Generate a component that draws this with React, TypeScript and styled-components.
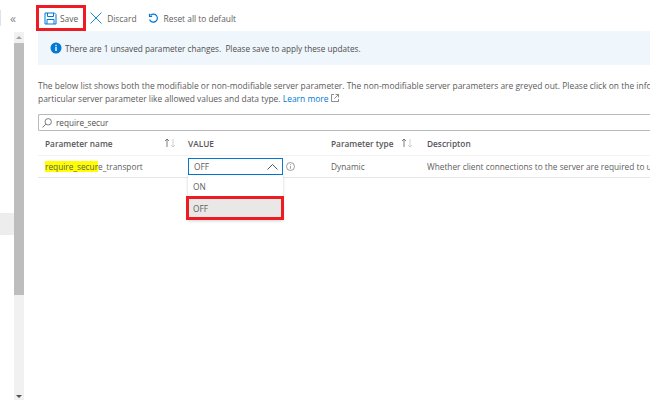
import styled, { createGlobalStyle } from "styled-components";

const GlobalStyle = createGlobalStyle`
  html, body {
    margin: 0;
    padding: 0;
    background: #fff;
  }
  body {
    font-family: "Open Sans", "Noto Sans", sans-serif;
    font-size: 9px;
    color: #5c5b5a;
  }
`;

const Page = styled.div`
  width: 650px;
  height: 400px;
  display: flex;
  overflow: hidden;
`;

const Sidebar = styled.div`
  width: 14px;
  flex: none;
  padding-top: 10px;
  box-sizing: border-box;
`;

const SideEdge = styled.div`
  width: 1px;
  height: 16px;
  margin-bottom: 187px;
  background: #e1e1e1;
`;

const SideItem = styled.div`
  height: 22px;
  background: #ededed;
`;

const ScrollColumn = styled.div`
  width: 10px;
  flex: none;
  display: flex;
  flex-direction: column;
`;

const Collapse = styled.div`
  height: 32px;
  width: 12px;
  margin-left: -7px;
  box-sizing: border-box;
  padding-top: 11px;
  text-align: center;
  font-size: 12px;
  line-height: 16px;
  color: #8a8886;
`;

const Track = styled.div`
  flex: 1;
  background: #f1f1f1;
  display: flex;
  flex-direction: column;
  align-items: center;
`;

const ArrowUp = styled.div`
  width: 0;
  height: 0;
  margin: 4px 0 4px;
  border-left: 3px solid transparent;
  border-right: 3px solid transparent;
  border-bottom: 3px solid #a3a3a3;
`;

const Thumb = styled.div`
  width: 100%;
  height: 252px;
  background: #bdbdbd;
`;

const ArrowDown = styled.div`
  width: 0;
  height: 0;
  margin: auto 0 2px;
  border-left: 3px solid transparent;
  border-right: 3px solid transparent;
  border-top: 3px solid #505050;
`;

const Main = styled.div`
  flex: 1;
  min-width: 0;
  display: flex;
  flex-direction: column;
`;

const Toolbar = styled.div`
  height: 31px;
  padding: 5px 0 0 12px;
  box-sizing: border-box;
  display: flex;
  align-items: flex-start;
`;

const ToolButton = styled.div<{ $outlined?: boolean }>`
  height: 26px;
  display: flex;
  align-items: center;
  gap: ${(p) => (p.$outlined ? 3 : 5)}px;
  box-sizing: border-box;
  padding: ${(p) => (p.$outlined ? "0 5px 0 5px" : "0 4px 0 1px")};
  border: ${(p) => (p.$outlined ? "3px solid #ed1c24" : "3px solid transparent")};
  font-size: 8.4px;
  color: #605e5c;
  white-space: nowrap;
`;

const Notice = styled.div`
  margin-left: 14px;
  height: 34px;
  padding-left: 12px;
  display: flex;
  align-items: center;
  gap: 3px;
  background: #eff6fc;
  font-size: 8.2px;
  color: #4f4e4d;
  white-space: pre;
`;

const Description = styled.p`
  margin: 14px 0 0 14px;
  width: 640px;
  font-size: 8.45px;
  line-height: 13px;
  color: #5c5b5a;
  white-space: nowrap;
`;

const LearnMore = styled.a`
  color: #0078d4;
  margin-right: 2px;
`;

const SearchBox = styled.div`
  margin: 9px 0 0 14px;
  height: 17px;
  box-sizing: border-box;
  border: 1px solid #b9b9b9;
  border-right: none;
  border-radius: 2px 0 0 2px;
  padding-left: 3px;
  display: flex;
  align-items: center;
  gap: 4px;
  font-size: 8.2px;
  color: #4f4e4d;
`;

const Table = styled.div`
  margin-left: 14px;
`;

const Row = styled.div<{ $header?: boolean }>`
  display: grid;
  grid-template-columns: 150px 143px 96px 1fr;
  height: ${(p) => (p.$header ? 24 : 21)}px;
  align-items: center;
  white-space: nowrap;
  border-bottom: ${(p) => (p.$header ? "1px solid #f3f2f1" : "1px solid #e6e6e6")};
  font-size: 8.3px;
  font-weight: ${(p) => (p.$header ? 600 : 400)};
  color: ${(p) => (p.$header ? "#57565a" : "#605e5c")};
`;

const HeadCell = styled.div<{ $first?: boolean }>`
  display: flex;
  align-items: center;
  justify-content: space-between;
  padding-left: ${(p) => (p.$first ? 7 : 0)}px;
  padding-right: ${(p) => (p.$first ? 12 : 14)}px;
`;

const ValueCell = styled.div`
  position: relative;
  height: 17px;
  display: flex;
  align-items: center;
  gap: 3px;
`;

const DescCell = styled.div`
  overflow: hidden;
`;

const NameCell = styled.div`
  padding-left: 7px;
`;

const Mark = styled.mark`
  background: #ffff00;
  color: inherit;
`;

const Select = styled.div`
  width: 95px;
  height: 17px;
  box-sizing: border-box;
  border: 1px solid #0078d4;
  padding: 0 4px 0 5px;
  display: flex;
  align-items: center;
  justify-content: space-between;
  color: #605e5c;
`;

const Dropdown = styled.div`
  position: absolute;
  top: 17px;
  left: 0;
  width: 95px;
  height: 45px;
  background: #fff;
  box-shadow: 0 1px 3px rgba(0, 0, 0, 0.18);
`;

const Option = styled.div`
  height: 22px;
  padding-left: 5px;
  display: flex;
  align-items: center;
`;

const SelectedOption = styled.div`
  position: absolute;
  left: -2px;
  top: 21px;
  width: 98px;
  height: 24px;
  box-sizing: border-box;
  padding-left: 4px;
  display: flex;
  align-items: center;
  background: #e9e8e7;
  border: 3px solid #ed1c24;
`;

const SortArrows = () => (
  <svg width="12" height="10" viewBox="0 0 12 10" fill="none">
    <path d="M3 9V1M1 3l2-2 2 2" stroke="#605e5c" strokeWidth="0.8" />
    <path d="M9 1v8M7 7l2 2 2-2" stroke="#c8c6c4" strokeWidth="0.8" />
  </svg>
);

export default function App() {
  return (
    <Page>
      <GlobalStyle />
      <Sidebar>
        <SideEdge />
        <SideItem />
      </Sidebar>
      <ScrollColumn>
        <Collapse>«</Collapse>
        <Track>
          <ArrowUp />
          <Thumb />
          <ArrowDown />
        </Track>
      </ScrollColumn>
      <Main>
        <Toolbar>
          <ToolButton $outlined>
            <svg width="13" height="13" viewBox="0 0 13 13" fill="none" stroke="#0078d4" strokeWidth="1">
              <path d="M1 1h9.5L12 2.5V12H1z" />
              <path d="M3.5 1v3.5h6V1M3 12V7.5h7V12" />
            </svg>
            Save
          </ToolButton>
          <ToolButton>
            <svg width="12" height="12" viewBox="0 0 12 12" fill="none" stroke="#0078d4" strokeWidth="0.9">
              <path d="M.5.5l11 11M11.5.5l-11 11" />
            </svg>
            Discard
          </ToolButton>
          <ToolButton>
            <svg width="11" height="11" viewBox="0 0 11 11" fill="none" stroke="#0078d4" strokeWidth="1.2">
              <path d="M2.6 2.2A4 4 0 1 1 1.6 6.5" />
              <path d="M1.5.8v2.6h2.6" />
            </svg>
            Reset all to default
          </ToolButton>
        </Toolbar>
        <Notice>
          <svg width="12" height="12" viewBox="0 0 12 12">
            <circle cx="6" cy="6" r="5.5" fill="#0078d4" />
            <rect x="5.3" y="5" width="1.4" height="4" fill="#fff" />
            <rect x="5.3" y="2.8" width="1.4" height="1.4" fill="#fff" />
          </svg>
          {"There are 1 unsaved parameter changes.  Please save to apply these updates."}
        </Notice>
        <Description>
          The below list shows both the modifiable or non-modifiable server parameter. The non-modifiable server parameters are greyed out. Please click on the info
          <br />
          particular server parameter like allowed values and data type. <LearnMore>Learn more</LearnMore>
          <svg width="8" height="8" viewBox="0 0 8 8" fill="none" stroke="#605e5c" strokeWidth="0.7">
            <path d="M3 .5H.5v7h7V5M4.5.5h3v3M7.5.5L3.5 4.5" />
          </svg>
        </Description>
        <SearchBox>
          <svg width="10" height="10" viewBox="0 0 10 10" fill="none" stroke="#605e5c" strokeWidth="0.8">
            <circle cx="6.2" cy="3.8" r="3.2" />
            <path d="M3.8 6.2L.5 9.5" />
          </svg>
          require_secur
        </SearchBox>
        <Table>
          <Row $header>
            <HeadCell $first>
              Parameter name
              <SortArrows />
            </HeadCell>
            <HeadCell>VALUE</HeadCell>
            <HeadCell>
              Parameter type
              <SortArrows />
            </HeadCell>
            <HeadCell>Descripton</HeadCell>
          </Row>
          <Row>
            <NameCell>
              <Mark>require_secur</Mark>e_transport
            </NameCell>
            <ValueCell>
              <Select>
                OFF
                <svg width="11" height="6" viewBox="0 0 11 6" fill="none" stroke="#444" strokeWidth="0.9">
                  <path d="M.5 5.5l5-5 5 5" />
                </svg>
              </Select>
              <svg width="9" height="9" viewBox="0 0 9 9" fill="none" stroke="#605e5c" strokeWidth="0.6">
                <circle cx="4.5" cy="4.5" r="4" />
                <path d="M4.5 4v2.8M4.5 2.2v.9" />
              </svg>
              <Dropdown>
                <Option>ON</Option>
                <SelectedOption>OFF</SelectedOption>
              </Dropdown>
            </ValueCell>
            <div>Dynamic</div>
            <DescCell>Whether client connections to the server are required to use a secure transport</DescCell>
          </Row>
        </Table>
      </Main>
    </Page>
  );
}
